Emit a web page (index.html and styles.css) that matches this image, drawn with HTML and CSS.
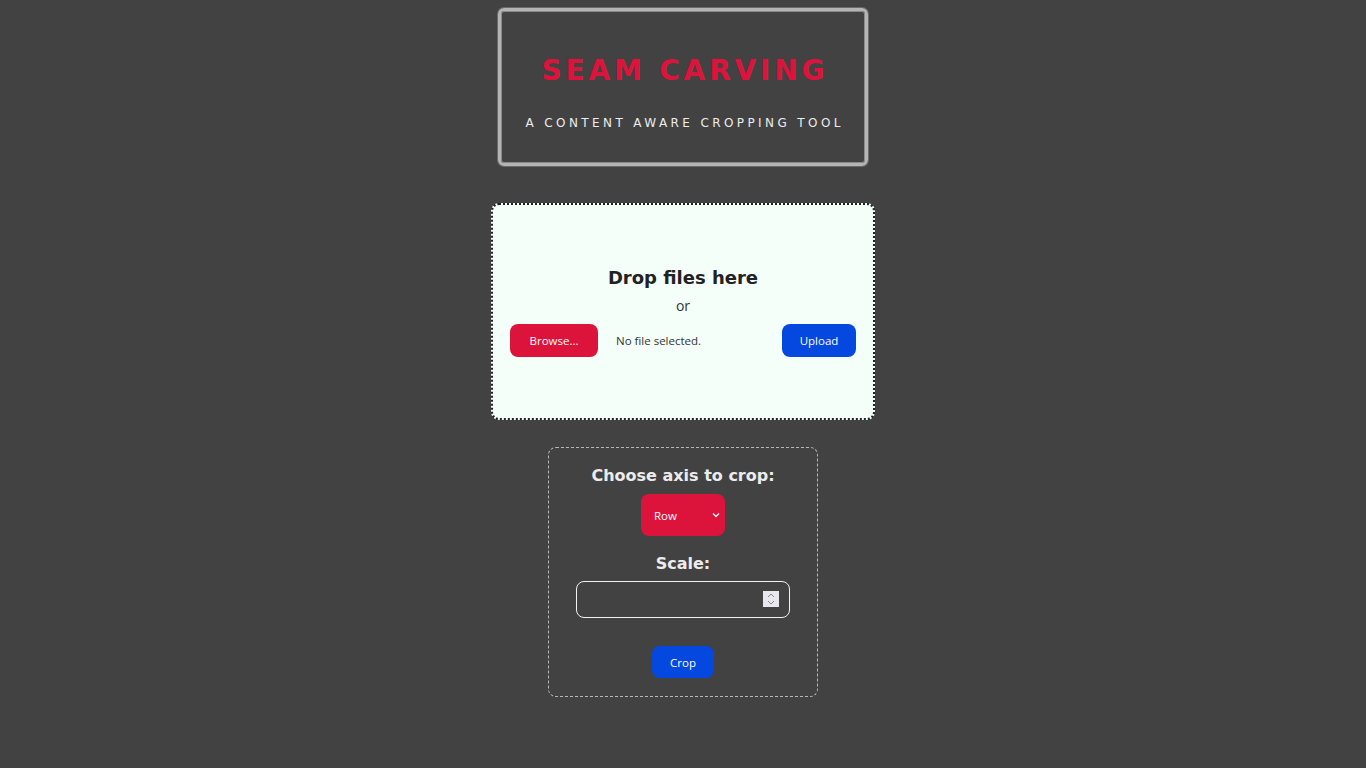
FILE: index.html
```html
<!DOCTYPE html>
<html lang="en">
<head>
<meta charset="utf-8">
<title>Seam Carving</title>
<link rel="stylesheet" href="styles.css">
</head>
<body>
<main class="page">
  <header class="title-box">
    <h1 class="title">SEAM CARVING</h1>
    <p class="subtitle">A CONTENT AWARE CROPPING TOOL</p>
  </header>

  <section class="dropzone">
    <h2 class="drop-title">Drop files here</h2>
    <p class="drop-or">or</p>
    <div class="file-row">
      <button class="btn btn-red btn-browse">Browse...</button>
      <span class="file-name">No file selected.</span>
      <button class="btn btn-blue btn-upload">Upload</button>
    </div>
  </section>

  <section class="panel">
    <h3 class="panel-label">Choose axis to crop:</h3>
    <div class="select">
      <span class="select-text">Row</span>
      <svg class="chev" width="8" height="6" viewBox="0 0 8 6"><path d="M1 1.5 L4 4.5 L7 1.5" fill="none" stroke="#fff" stroke-width="1.3"/></svg>
    </div>
    <h3 class="panel-label label-scale">Scale:</h3>
    <div class="num-input">
      <span class="spinner">
        <svg width="14" height="16" viewBox="0 0 14 16"><path d="M4 6 L7 3 L10 6 M4 10 L7 13 L10 10" fill="none" stroke="#888" stroke-width="1"/></svg>
      </span>
    </div>
    <button class="btn btn-blue btn-crop">Crop</button>
  </section>
</main>
</body>
</html>
```

FILE: styles.css
```css
html, body {
  margin: 0;
  padding: 0;
  background: #424242;
}
body {
  font-family: "DejaVu Sans", sans-serif;
}
.page {
  display: flex;
  flex-direction: column;
  align-items: center;
  padding-top: 8px;
}
.title-box {
  box-sizing: border-box;
  width: 370px;
  height: 158px;
  border: 3px solid #b4b4b4;
  border-radius: 6px;
  box-shadow: inset 0 0 0 1px #8a8a8a, 0 0 0 1px #6a6a6a;
  display: flex;
  flex-direction: column;
  align-items: center;
  padding-top: 42px;
}
.title {
  margin: 0;
  font-family: "DejaVu Sans", sans-serif;
  font-weight: bold;
  font-size: 28px;
  line-height: 36px;
  letter-spacing: 3.85px;
  padding-left: 3.85px;
  color: #dc143c;
}
.subtitle {
  margin: 0;
  margin-top: 26px;
  font-family: "DejaVu Sans", sans-serif;
  font-size: 12px;
  line-height: 16px;
  letter-spacing: 3.4px;
  padding-left: 3.4px;
  color: #ececec;
}
.dropzone {
  box-sizing: border-box;
  margin-top: 37px;
  width: 384px;
  height: 217px;
  background: #f5fffa;
  border: 2px dotted #222;
  border-radius: 8px;
  display: flex;
  flex-direction: column;
  align-items: center;
  padding-top: 61px;
}
.drop-title {
  margin: 0;
  font-family: "DejaVu Sans", sans-serif;
  font-weight: bold;
  font-size: 18px;
  line-height: 24px;
  color: #222;
}
.drop-or {
  margin: 6px 0 0;
  font-family: "Open Sans", sans-serif;
  font-size: 14px;
  line-height: 20px;
  color: #333;
}
.file-row {
  display: flex;
  align-items: center;
  width: 346px;
  margin-top: 8px;
}
.btn {
  border: none;
  border-radius: 8px;
  color: #fff;
  font-family: "Open Sans", sans-serif;
  font-size: 11.5px;
  padding: 0;
  cursor: pointer;
}
.btn-red { background: #dc143c; }
.btn-blue { background: #0548e0; }
.btn-browse {
  width: 88px;
  height: 33px;
}
.file-name {
  margin-left: 18px;
  font-family: "Open Sans", sans-serif;
  font-size: 11.5px;
  color: #333;
  flex: 1;
}
.btn-upload {
  width: 74px;
  height: 33px;
}
.panel {
  box-sizing: border-box;
  margin-top: 27px;
  width: 270px;
  height: 250px;
  border: 1px dashed #b8b8b8;
  border-radius: 8px;
  display: flex;
  flex-direction: column;
  align-items: center;
  padding-top: 18px;
}
.panel-label {
  margin: 0;
  font-family: "DejaVu Sans", sans-serif;
  font-weight: bold;
  font-size: 16px;
  line-height: 20px;
  color: #ececec;
}
.select {
  box-sizing: border-box;
  margin-top: 8px;
  width: 84px;
  height: 42px;
  background: #dc143c;
  border-radius: 8px;
  display: flex;
  align-items: center;
  justify-content: space-between;
  padding: 0 5px 0 13px;
}
.select-text {
  font-family: "Open Sans", sans-serif;
  font-size: 11.5px;
  color: #fff;
}
.chev { display: block; }
.label-scale {
  margin-top: 18px;
}
.num-input {
  position: relative;
  box-sizing: border-box;
  margin-top: 7px;
  width: 214px;
  height: 37px;
  border: 1px solid #f2f2f2;
  border-radius: 8px;
}
.spinner {
  position: absolute;
  right: 10px;
  top: 9px;
  width: 16px;
  height: 16px;
  background: #e8e8ee;
  display: flex;
  align-items: center;
  justify-content: center;
}
.spinner svg { display: block; }
.btn-crop {
  margin-top: 28px;
  width: 62px;
  height: 32px;
}
```
